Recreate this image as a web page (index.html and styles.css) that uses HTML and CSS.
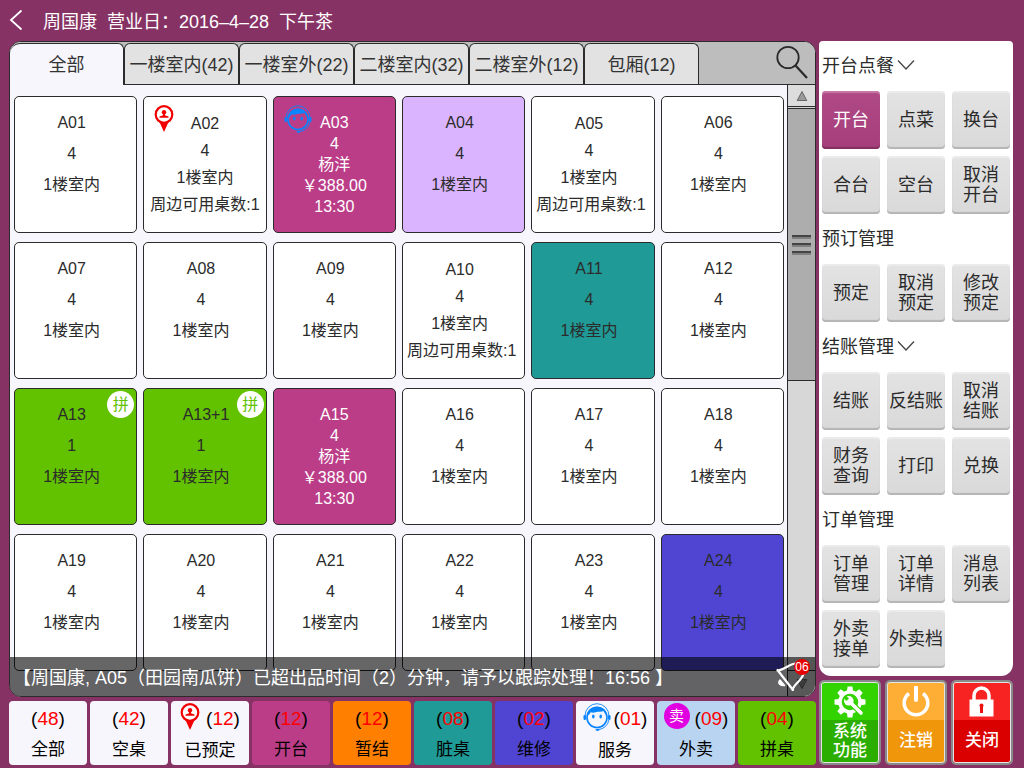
FILE: index.html
```html
<!DOCTYPE html>
<html lang="zh-CN">
<head>
<meta charset="utf-8">
<title>桌台管理</title>
<meta name="viewport" content="width=device-width, initial-scale=1">
<link rel="stylesheet" href="styles.css">
</head>
<body>
<svg class="defs" aria-hidden="true">
  <symbol id="pin" viewBox="0 0 20 27">
    <path d="M5 16 L15 16 L10 27 Z" fill="#f00000"/>
    <circle cx="10" cy="9.500" r="8.300" fill="#fff" stroke="#f00000" stroke-width="2.200"/>
    <circle cx="10" cy="7.200" r="2.200" fill="#f00000"/>
    <path d="M9 8h2v2.200l3.500 1.300v1.300h-9v-1.300l3.500-1.300z" fill="#f00000"/>
  </symbol>
  <symbol id="face" viewBox="0 0 28 28">
    <path d="M2 13a12 12.300 0 0 1 24 0" fill="none" stroke="currentColor" stroke-width="0.900"/>
    <circle cx="14" cy="14.500" r="10" fill="none" stroke="currentColor" stroke-width="1.600"/>
    <path d="M4 12.500C4.500 7 8.500 3.500 14 3.500S23.500 7 24 12.500C22.500 11.500 21.500 10 21 8C18 9.300 15.500 8.200 12.500 9.300C10.500 10 9 9.500 7.500 9.300C7 11 6 12 4 12.500Z" fill="currentColor"/>
    <rect x="0.500" y="12" width="2.500" height="5" rx="1.200" fill="currentColor"/>
    <rect x="25" y="12" width="2.500" height="5" rx="1.200" fill="currentColor"/>
    <ellipse cx="10.300" cy="13.500" rx="1.300" ry="1.900" fill="currentColor"/>
    <ellipse cx="17.700" cy="13.500" rx="1.300" ry="1.900" fill="currentColor"/>
    <path d="M26 17Q24 25.500 15 26.700" fill="none" stroke="currentColor" stroke-width="0.900"/>
    <ellipse cx="14.500" cy="26.800" rx="2" ry="1.100" fill="currentColor"/>
  </symbol>
  <symbol id="chevron" viewBox="0 0 18 12">
    <path d="M1 1.500L9 10L17 1.500" fill="none" stroke="#444" stroke-width="1.300"/>
  </symbol>
</svg>

<div class="app">
  <header class="topbar">
    <button class="back" aria-label="返回"><svg width="14" height="22" viewBox="0 0 14 22"><path d="M12.500 1.500L2 11L12.500 20.500" fill="none" stroke="#fff" stroke-width="1.800"/></svg></button>
    <span>周国康</span><span>营业日：2016–4–28</span><span>下午茶</span>
  </header>

  <div class="columns">
    <main class="left">
      <section class="panel">
        <nav class="tabs">
          <button class="tab active">全部</button>
          <button class="tab">一楼室内(42)</button>
          <button class="tab">一楼室外(22)</button>
          <button class="tab">二楼室内(32)</button>
          <button class="tab">二楼室外(12)</button>
          <button class="tab">包厢(12)</button>
          <button class="search" aria-label="搜索"><svg width="32" height="34" viewBox="0 0 32 34"><circle cx="12" cy="12.500" r="10.700" fill="none" stroke="#2a2a2a" stroke-width="1.800"/><path d="M19.500 20.500L31 33" stroke="#2a2a2a" stroke-width="2.200"/></svg></button>
        </nav>
        <div class="view">
          <div class="cards">
            <button class="card"><span>A01</span><span>4</span><span>1楼室内</span></button>
            <button class="card four mid"><svg class="mark" width="20" height="27"><use href="#pin"/></svg><span>A02</span><span>4</span><span>1楼室内</span><span>周边可用桌数:1</span></button>
            <button class="card open"><svg class="mark face" width="28" height="28"><use href="#face"/></svg><span>A03</span><span>4</span><span>杨洋</span><span>￥388.00</span><span>13:30</span></button>
            <button class="card lilac"><span>A04</span><span>4</span><span>1楼室内</span></button>
            <button class="card four"><span>A05</span><span>4</span><span>1楼室内</span><span>周边可用桌数:1</span></button>
            <button class="card"><span>A06</span><span>4</span><span>1楼室内</span></button>

            <button class="card"><span>A07</span><span>4</span><span>1楼室内</span></button>
            <button class="card"><span>A08</span><span>4</span><span>1楼室内</span></button>
            <button class="card"><span>A09</span><span>4</span><span>1楼室内</span></button>
            <button class="card four"><span>A10</span><span>4</span><span>1楼室内</span><span>周边可用桌数:1</span></button>
            <button class="card teal"><span>A11</span><span>4</span><span>1楼室内</span></button>
            <button class="card"><span>A12</span><span>4</span><span>1楼室内</span></button>

            <button class="card green"><b class="share">拼</b><span>A13</span><span>1</span><span>1楼室内</span></button>
            <button class="card green"><b class="share">拼</b><span class="joined">A13+1</span><span>1</span><span>1楼室内</span></button>
            <button class="card open"><span>A15</span><span>4</span><span>杨洋</span><span>￥388.00</span><span>13:30</span></button>
            <button class="card"><span>A16</span><span>4</span><span>1楼室内</span></button>
            <button class="card"><span>A17</span><span>4</span><span>1楼室内</span></button>
            <button class="card"><span>A18</span><span>4</span><span>1楼室内</span></button>

            <button class="card"><span>A19</span><span>4</span><span>1楼室内</span></button>
            <button class="card"><span>A20</span><span>4</span><span>1楼室内</span></button>
            <button class="card"><span>A21</span><span>4</span><span>1楼室内</span></button>
            <button class="card"><span>A22</span><span>4</span><span>1楼室内</span></button>
            <button class="card"><span>A23</span><span>4</span><span>1楼室内</span></button>
            <button class="card blue"><span>A24</span><span>4</span><span>1楼室内</span></button>
          </div>
          <div class="scroll">
            <button class="arrow up" aria-label="向上"><svg width="12" height="12" viewBox="0 0 12 12"><path d="M6 1.500L10.800 10.500H1.200Z" fill="#999" stroke="#666"/></svg></button>
            <div class="thumb"><i></i><i></i><i></i></div>
            <button class="arrow down" aria-label="向下"><svg width="12" height="12" viewBox="0 0 12 12"><path d="M6 10.500L10.800 1.500H1.200Z" fill="#999" stroke="#666"/></svg></button>
          </div>
        </div>
        <div class="notice">
          <p>【周国康, A05（田园南瓜饼）已超出品时间（2）分钟，请予以跟踪处理！16:56 】</p>
          <span class="bell">
            <svg width="30" height="34" viewBox="0 0 30 34"><path d="M1.500 11L17 31M1.500 11.500C9 10.500 14 4.500 20 4.500M16.500 31C18 24 28 21 28 12" fill="none" stroke="#fff" stroke-width="2.200" stroke-linecap="round"/><path d="M4 21C1.500 24 3.500 27 8.500 26.500Z" fill="#fff" stroke="#fff" stroke-width="1.500" stroke-linejoin="round"/></svg>
            <b class="badge">06</b>
          </span>
        </div>
      </section>

      <nav class="tiles">
        <button class="tile"><span class="count">(<em>48</em>)</span><span>全部</span></button>
        <button class="tile"><span class="count">(<em>42</em>)</span><span>空桌</span></button>
        <button class="tile"><span class="count"><svg width="20" height="27"><use href="#pin"/></svg>(<em>12</em>)</span><span>已预定</span></button>
        <button class="tile t-open"><span class="count">(<em>12</em>)</span><span>开台</span></button>
        <button class="tile t-orange"><span class="count">(<em>12</em>)</span><span>暂结</span></button>
        <button class="tile t-teal"><span class="count">(<em>08</em>)</span><span>脏桌</span></button>
        <button class="tile t-blue"><span class="count">(<em>02</em>)</span><span>维修</span></button>
        <button class="tile"><span class="count"><svg class="face" width="28" height="28"><use href="#face"/></svg>(<em>01</em>)</span><span>服务</span></button>
        <button class="tile t-sky"><span class="count"><b class="sell">卖</b>(<em>09</em>)</span><span>外卖</span></button>
        <button class="tile t-green"><span class="count">(<em>04</em>)</span><span>拼桌</span></button>
      </nav>
    </main>

    <aside class="right">
      <div class="menu">
        <h2>开台点餐<svg width="18" height="12"><use href="#chevron"/></svg></h2>
        <div class="keys">
          <button class="key on">开台</button><button class="key">点菜</button><button class="key">换台</button>
          <button class="key">合台</button><button class="key">空台</button><button class="key">取消<br>开台</button>
        </div>
        <h2>预订管理</h2>
        <div class="keys">
          <button class="key">预定</button><button class="key">取消<br>预定</button><button class="key">修改<br>预定</button>
        </div>
        <h2>结账管理<svg width="18" height="12"><use href="#chevron"/></svg></h2>
        <div class="keys">
          <button class="key">结账</button><button class="key">反结账</button><button class="key">取消<br>结账</button>
          <button class="key">财务<br>查询</button><button class="key">打印</button><button class="key">兑换</button>
        </div>
        <h2>订单管理</h2>
        <div class="keys">
          <button class="key">订单<br>管理</button><button class="key">订单<br>详情</button><button class="key">消息<br>列表</button>
          <button class="key">外卖<br>接单</button><button class="key">外卖档</button>
        </div>
      </div>
      <div class="system">
        <button class="sys s-green">
          <svg width="32" height="32" viewBox="0 0 32 32">
            <circle cx="16" cy="16" r="10" fill="none" stroke="#fff" stroke-width="3.500"/>
            <g fill="#fff">
              <path id="tooth" d="M12.800 5.500L13.600 0.500H18.400L19.200 5.500Z"/>
              <use href="#tooth" transform="rotate(45 16 16)"/><use href="#tooth" transform="rotate(90 16 16)"/><use href="#tooth" transform="rotate(180 16 16)"/><use href="#tooth" transform="rotate(225 16 16)"/><use href="#tooth" transform="rotate(270 16 16)"/><use href="#tooth" transform="rotate(315 16 16)"/>
            </g>
            <path d="M17 17L27 27" stroke="#33d300" stroke-width="6" stroke-linecap="round"/>
            <path d="M16 16L27 27" stroke="#fff" stroke-width="3.600" stroke-linecap="round"/>
            <circle cx="14.800" cy="14.800" r="4.800" fill="#fff"/>
            <path d="M9 11.500L11.500 9L15 12.500L12.500 15Z" fill="#33d300"/>
          </svg>
          <span>系统<br>功能</span>
        </button>
        <button class="sys s-orange">
          <svg width="32" height="32" viewBox="0 0 32 32"><path d="M9 7.500A11.800 11.800 0 1 0 23 7.500" fill="none" stroke="#fff" stroke-width="3.500"/><path d="M16 1.500V14" stroke="#fff" stroke-width="4" stroke-linecap="round"/></svg>
          <span>注销</span>
        </button>
        <button class="sys s-red">
          <svg width="32" height="32" viewBox="0 0 32 32"><path d="M8 14V9.500a7.500 7.500 0 0 1 15 0V14" fill="none" stroke="#fff" stroke-width="3.500"/><rect x="3.500" y="13.500" width="24" height="17" fill="#fff"/><circle cx="15.500" cy="19.500" r="2" fill="#e11"/><path d="M14 19h3v8h-3z" fill="#e11"/></svg>
          <span>关闭</span>
        </button>
      </div>
    </aside>
  </div>
</div>
</body>
</html>
```
FILE: styles.css
```css
* { box-sizing: border-box; }

body {
  margin: 0;
  background: #873265;
  color: #2b2b2b;
  font-family: "Liberation Sans", "Noto Sans CJK SC", sans-serif;
  font-size: 16px;
}

button {
  margin: 0;
  padding: 0;
  border: 0;
  background: none;
  color: inherit;
  font: inherit;
  cursor: pointer;
}

.defs { position: absolute; width: 0; height: 0; }

.app {
  display: flex;
  flex-direction: column;
  height: 100vh;
  min-height: 768px;
  padding: 0 11px 3px 9px;
}

.topbar {
  display: flex;
  align-items: center;
  gap: 10px;
  height: 41px;
  padding-bottom: 2px;
  color: #fff;
  font-size: 18px;
}
.back { display: flex; width: 24px; }

.columns {
  display: grid;
  grid-template-columns: minmax(0, 1fr) 194px;
  gap: 3px;
  flex: 1;
  min-height: 0;
}

.left, .right {
  display: flex;
  flex-direction: column;
  gap: 4px;
  min-height: 0;
}

.panel {
  position: relative;
  display: flex;
  flex-direction: column;
  flex: 1;
  min-height: 0;
  overflow: hidden;
  border: 1px solid #2b2b2b;
  border-radius: 12px;
  background: #f7f6fc;
}

.tabs {
  display: flex;
  height: 43px;
  padding-top: 1px;
  background: #bdbdbd;
  border-bottom: 1px solid #2b2b2b;
}
.tab {
  width: 115px;
  padding-bottom: 3px;
  border: 1px solid #2b2b2b;
  border-bottom: 0;
  border-radius: 6px 6px 0 0;
  background: #e2e2e2;
  color: #333;
  font-size: 18px;
  white-space: nowrap;
}
.tab.active {
  width: 114px;
  margin-bottom: -1px;
  border-left: 0;
  border-radius: 10px 6px 0 0;
  background: #f7f6fc;
}
.search { display: flex; margin: 2px 7px 0 auto; }

.view { display: flex; flex: 1; min-height: 0; }

.cards {
  display: grid;
  grid-template-columns: repeat(6, minmax(0, 1fr));
  grid-auto-rows: 137px;
  gap: 9px 6px;
  flex: 1;
  min-height: 0;
  padding: 11px 3px 0 4px;
  overflow: hidden;
}
.card {
  position: relative;
  display: flex;
  flex-direction: column;
  align-items: center;
  justify-content: flex-start;
  padding: 10px 8px 0 0;
  border: 1px solid #2b2b2b;
  border-radius: 5px;
  background: #fff;
  line-height: 31px;
  white-space: nowrap;
}
.card.four { padding-top: 13px; line-height: 27px; }
.card.four span:last-child { margin-right: -4px; }
.card.mid { padding-right: 0; }
.card.mid span:last-child { margin-right: 0; }
.card.open {
  padding: 15px 0 0;
  background: #bb3d88;
  color: #fff;
  line-height: 21px;
}
.card.lilac { background: #dab4ff; }
.card.teal { background: #209a96; }
.card.green { background: #62c200; }
.card.blue { background: #4f45d2; }
.joined { padding-left: 10px; }

.mark { position: absolute; left: 10px; top: 8px; }
.face { color: #0a84ff; }
.share {
  position: absolute;
  top: 2px;
  right: 2px;
  width: 27px;
  height: 27px;
  border-radius: 50%;
  background: #fff;
  color: #62c200;
  font-size: 16px;
  font-weight: 400;
  line-height: 27px;
}

.scroll {
  display: flex;
  flex-direction: column;
  width: 28px;
  border-left: 1px solid #2b2b2b;
  background: #d7d7d7;
}
.arrow {
  display: flex;
  align-items: center;
  justify-content: center;
  height: 22px;
  background: #dcdcdc;
}
.up { border-bottom: 1px solid #2b2b2b; }
.down { height: 26px; margin-top: auto; border-top: 1px solid #2b2b2b; }
.thumb {
  display: flex;
  flex-direction: column;
  align-items: center;
  justify-content: center;
  gap: 4px;
  height: 273px;
  margin-top: 1px;
  border: solid #2b2b2b;
  border-width: 1px 0;
  background: #adadad;
}
.thumb i { width: 19px; height: 4px; border-top: 2px solid #444; background: #808080; }

.notice {
  position: absolute;
  right: 0;
  bottom: 0;
  left: 0;
  display: flex;
  align-items: center;
  justify-content: space-between;
  height: 39px;
  padding: 0 9px 2px 3px;
  background: rgba(0, 0, 0, 0.6);
  color: #fff;
  font-size: 18px;
  white-space: nowrap;
}
.notice p { margin: 0; }
.bell { position: relative; display: flex; }
.badge {
  position: absolute;
  top: 0;
  right: -4px;
  width: 16px;
  height: 16px;
  border-radius: 50%;
  background: #e60000;
  font-size: 12px;
  font-weight: 400;
  line-height: 16px;
  text-align: center;
}

.tiles { display: flex; gap: 3px; height: 64px; }
.tile {
  display: flex;
  flex: 1;
  flex-direction: column;
  align-items: center;
  gap: 1px;
  padding-top: 2px;
  border-radius: 4px;
  background: #f7f6fc;
  color: #000;
  font-size: 17px;
  line-height: 30px;
  white-space: nowrap;
}
.count {
  display: flex;
  align-items: center;
  height: 32px;
  font-size: 19px;
}
.count em { color: #f00; font-style: normal; }
.count svg { margin: 0 6px 5px 0; }
.count .face { margin-right: 3px; }
.sell {
  width: 26px;
  height: 26px;
  margin: 0 5px 5px 0;
  border-radius: 50%;
  background: #e000e0;
  color: #fff;
  font-size: 15px;
  font-weight: 400;
  line-height: 26px;
}
.t-open { background: #bb3d88; }
.t-orange { background: #ff7f00; }
.t-teal { background: #209a96; }
.t-blue { background: #4f45d2; }
.t-sky { background: #b8d4f0; }
.t-green { background: #62c200; }

.menu {
  flex: 1;
  padding: 0 3px 8px;
  border-radius: 4px 4px 12px 12px;
  background: #fff;
}
h2 {
  display: flex;
  align-items: center;
  gap: 3px;
  height: 50px;
  margin: 0;
  padding-bottom: 4px;
  font-size: 18px;
  font-weight: 400;
}
h2 svg { margin-top: 2px; }
.keys {
  display: grid;
  grid-template-columns: repeat(3, 58px);
  grid-auto-rows: 58px;
  gap: 7px;
}
.key {
  border-radius: 4px;
  background: linear-gradient(#e3e3e3, #d9d9d9);
  box-shadow: inset 0 2px 1px #ececec, inset 0 -2px 1px #b4b4b4;
  font-size: 18px;
  line-height: 20px;
  white-space: nowrap;
}
.key.on {
  background: linear-gradient(#b04a87, #a53e7b);
  box-shadow: inset 0 2px 1px #c77aa8, inset 0 -2px 1px #84305f;
  color: #fff;
}

.system {
  display: grid;
  grid-template-columns: repeat(3, 1fr);
  gap: 4px;
  height: 85px;
}
.sys {
  display: flex;
  flex-direction: column;
  align-items: center;
  padding-top: 4px;
  border: 2px solid #8a8a8a;
  border-radius: 5px;
  box-shadow: inset 0 0 0 1px #e4e4e4;
  color: #fff;
  font-size: 17px;
  font-weight: 500;
  line-height: 19px;
}
.sys span {
  display: flex;
  flex: 1;
  align-items: center;
}
.s-green { background: linear-gradient(#33d300 38px, #2cae00 38px); }
.s-orange { background: linear-gradient(#ffae35 38px, #f0960a 38px); }
.s-red { background: linear-gradient(#f72222 38px, #da0000 38px); }
```
